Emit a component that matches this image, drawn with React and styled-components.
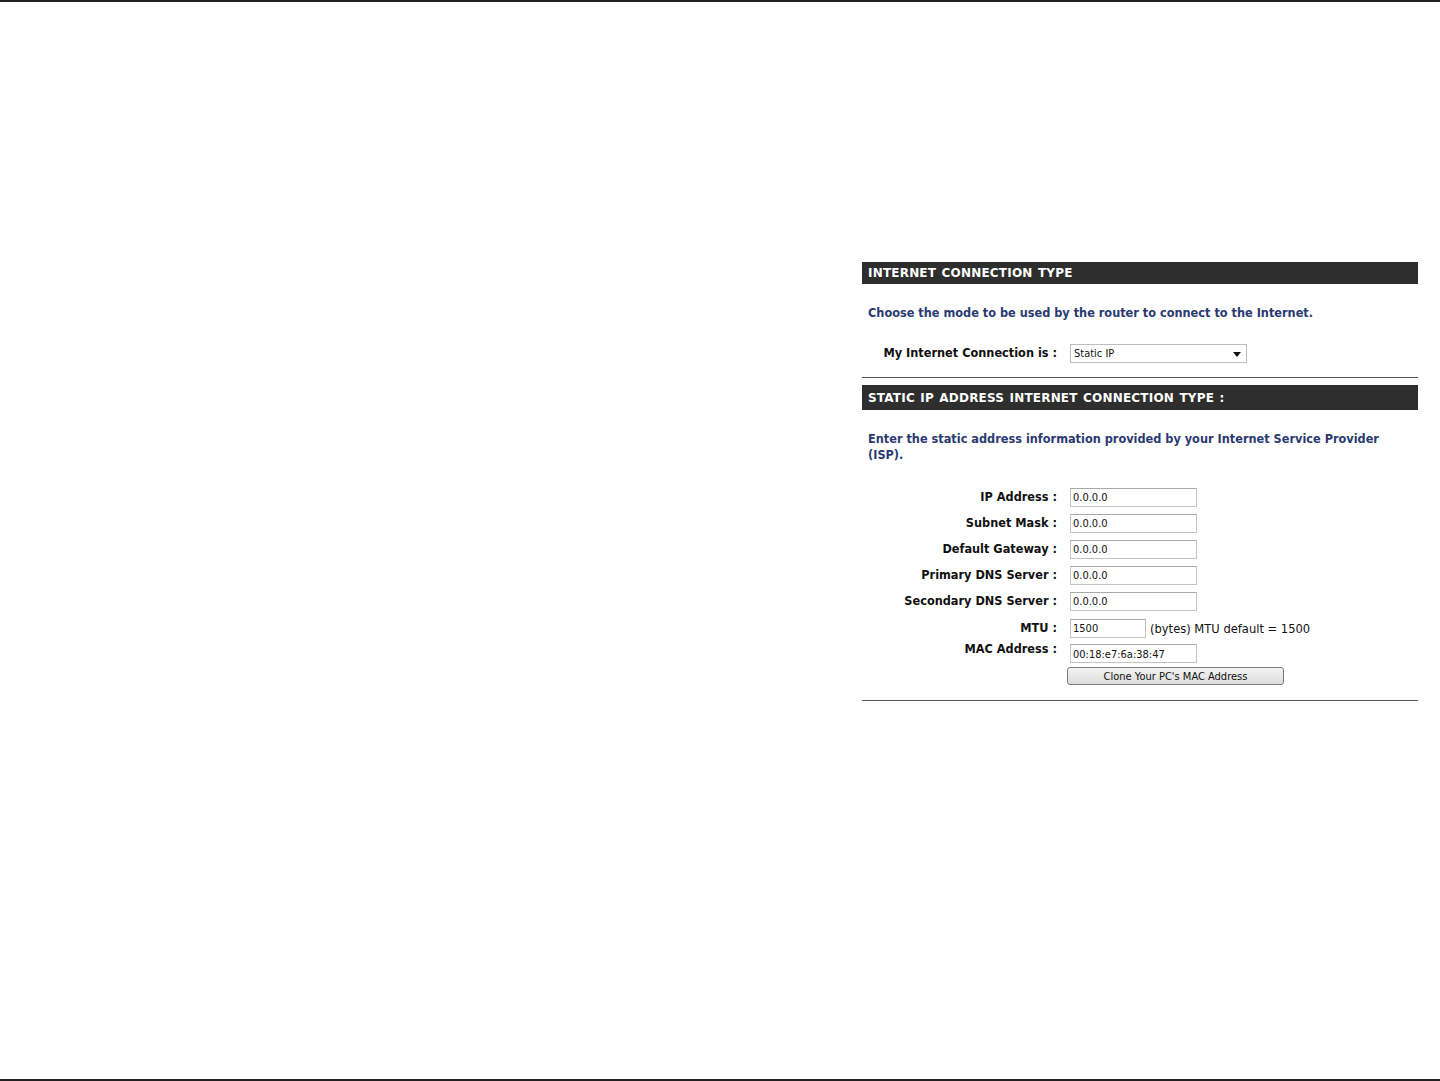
import React from "react";
import styled, { createGlobalStyle } from "styled-components";

const GlobalStyle = createGlobalStyle`
  html, body {
    margin: 0;
    padding: 0;
    background: #fff;
  }
  body {
    font-family: "DejaVu Sans Condensed", "DejaVu Sans", Tahoma, sans-serif;
  }
`;

const Page = styled.div`
  box-sizing: border-box;
  height: 1081px;
  border-top: 2px solid #231f20;
  border-bottom: 2px solid #231f20;
  padding: 260px 0 0 862px;
`;

const Panel = styled.section`
  width: 556px;
`;

const SectionBar = styled.h2`
  margin: ${(p) => p.$top || 0}px 0 0;
  height: ${(p) => p.$height || 22}px;
  background: #2e2e2e;
  color: #fff;
  font-family: "DejaVu Sans", Verdana, sans-serif;
  font-size: 12px;
  font-weight: bold;
  letter-spacing: 0.2px;
  word-spacing: 1px;
  padding-left: 6px;
  display: flex;
  align-items: center;
`;

const Intro = styled.p`
  margin: ${(p) => p.$top || 21}px 0 0;
  padding-left: 6px;
  padding-right: 20px;
  color: #2c3a72;
  font-size: 12.6px;
  font-weight: bold;
  line-height: 16px;
`;

const Row = styled.div`
  display: flex;
  align-items: ${(p) => (p.$top ? "flex-start" : "center")};
  gap: 12px;
  margin-top: ${(p) => p.$gap}px;
  min-height: 20px;
`;

const Label = styled.label`
  width: 195px;
  flex: none;
  text-align: right;
  font-size: 12.6px;
  font-weight: bold;
  color: #111;
  line-height: 14px;
`;

const Field = styled.input`
  box-sizing: border-box;
  width: ${(p) => p.$width || 127}px;
  height: 19px;
  margin: ${(p) => p.$drop || 0}px 0 0 1px;
  padding: 1px 2px 0;
  border: 1px solid #c4c4c4;
  border-top-color: #a9a9a9;
  font-family: "DejaVu Sans Condensed", "DejaVu Sans", Tahoma, sans-serif;
  font-size: 11px;
  color: #111;
  outline: none;
`;

const Note = styled.span`
  font-size: 12.8px;
  color: #111;
  margin-left: -8px;
`;

const SelectBox = styled.div`
  position: relative;
  box-sizing: border-box;
  width: 177px;
  height: 19px;
  margin-left: 1px;
  border: 1px solid #bdbdbd;
  font-size: 11px;
  color: #111;
  padding: 0 3px;
  display: flex;
  align-items: center;
`;

const Arrow = styled.svg`
  position: absolute;
  right: 5px;
  top: 7px;
`;

const Button = styled.button`
  box-sizing: border-box;
  width: 217px;
  height: 18px;
  margin-left: -2px;
  padding: 0;
  border: 1px solid #7a7a7a;
  border-radius: 3px;
  background: linear-gradient(#f4f4f4, #dcdcdc);
  font-family: "DejaVu Sans Condensed", "DejaVu Sans", Tahoma, sans-serif;
  font-size: 11px;
  color: #111;
`;

const Rule = styled.hr`
  margin: ${(p) => p.$top}px 0 0;
  border: none;
  border-top: 1px solid #555;
  height: 0;
`;

const fields = [
  ["IP Address :", "0.0.0.0", 24],
  ["Subnet Mask :", "0.0.0.0", 6],
  ["Default Gateway :", "0.0.0.0", 6],
  ["Primary DNS Server :", "0.0.0.0", 6],
  ["Secondary DNS Server :", "0.0.0.0", 6],
];

export default function App() {
  return (
    <>
      <GlobalStyle />
      <Page>
        <Panel>
          <SectionBar>INTERNET CONNECTION TYPE</SectionBar>
          <Intro>Choose the mode to be used by the router to connect to the Internet.</Intro>
          <Row $gap={22}>
            <Label>My Internet Connection is :</Label>
            <SelectBox>
              Static IP
              <Arrow width="8" height="5" viewBox="0 0 8 5">
                <path d="M0 0h8L4 5z" fill="#111" />
              </Arrow>
            </SelectBox>
          </Row>
          <Rule $top={14} />
          <SectionBar $top={7} $height={25}>
            STATIC IP ADDRESS INTERNET CONNECTION TYPE :
          </SectionBar>
          <Intro>
            Enter the static address information provided by your Internet Service Provider (ISP).
          </Intro>
          {fields.map(([label, value, gap]) => (
            <Row key={label} $gap={gap}>
              <Label>{label}</Label>
              <Field defaultValue={value} />
            </Row>
          ))}
          <Row $gap={7}>
            <Label>MTU :</Label>
            <Field $width={76} defaultValue="1500" />
            <Note>(bytes) MTU default = 1500</Note>
          </Row>
          <Row $gap={4} $top>
            <Label>MAC Address :</Label>
            <Field $drop={2} defaultValue="00:18:e7:6a:38:47" />
          </Row>
          <Row $gap={3}>
            <Label />
            <Button type="button">Clone Your PC's MAC Address</Button>
          </Row>
          <Rule $top={14} />
        </Panel>
      </Page>
    </>
  );
}
